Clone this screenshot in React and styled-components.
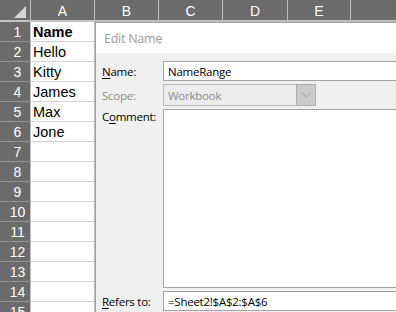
import React from 'react';
import styled, { createGlobalStyle } from 'styled-components';

const Global = createGlobalStyle`
  html, body { margin: 0; padding: 0; width: 396px; height: 312px; overflow: hidden; background: #fff; }
  #root { width: 396px; height: 312px; }
`;

const Page = styled.div`
  position: relative;
  width: 396px;
  height: 312px;
  overflow: hidden;
  font-family: "Liberation Sans", Arial, sans-serif;
`;

const Sheet = styled.div`
  display: grid;
  grid-template-columns: 31px 64px 64px 64px 65px 63px 64px;
  grid-template-rows: 22px repeat(15, 20px);
`;

const Corner = styled.div`
  background: #6b6b6b;
  border-right: 1px solid #c4c4c4;
  border-bottom: 2px solid #c4c4c4;
  box-sizing: border-box;
  display: flex;
  align-items: flex-end;
  justify-content: flex-end;
  padding: 0 4px 2px 0;
`;

const ColHead = styled.div`
  background: #6b6b6b;
  color: #fff;
  font-size: 14px;
  border-right: 1px solid #bdbdbd;
  border-bottom: 2px solid #c4c4c4;
  box-sizing: border-box;
  display: flex;
  align-items: center;
  justify-content: center;
  padding-top: 1px;
`;

const RowHead = styled.div`
  background: #6b6b6b;
  color: #fff;
  font-size: 14px;
  border-right: 1px solid #c4c4c4;
  border-bottom: 1px solid #959595;
  box-sizing: border-box;
  display: flex;
  align-items: center;
  justify-content: center;
  padding-left: 5px;
`;

const Cell = styled.div`
  background: #fff;
  color: #000;
  font-size: 14.5px;
  font-weight: ${(p) => (p.$bold ? 700 : 400)};
  border-right: 1px solid #d4d4d4;
  border-bottom: 1px solid #d4d4d4;
  box-sizing: border-box;
  display: flex;
  align-items: center;
  padding-left: 2px;
  white-space: nowrap;
`;

const Dialog = styled.div`
  position: absolute;
  left: 95px;
  top: 22px;
  width: 340px;
  height: 320px;
  background: #f0f0f0;
  border: 1px solid #a3a3a3;
  box-shadow: -1px 0 2px rgba(0, 0, 0, 0.15);
  font-family: "Open Sans", "Noto Sans", sans-serif;
  font-size: 11.5px;
  letter-spacing: -0.25px;
`;

const TitleBar = styled.div`
  height: 30px;
  background: #fff;
  color: #9a9a9a;
  font-size: 12.5px;
  display: flex;
  align-items: center;
  padding-left: 8px;
`;

const Form = styled.div`
  display: grid;
  grid-template-columns: 61px 1fr;
  grid-template-rows: 20px 22px 179px 20px;
  row-gap: 3px;
  padding: 8px 0 0 6px;
`;

const Label = styled.div`
  color: ${(p) => (p.$disabled ? '#8a8a8a' : '#000')};
  align-self: ${(p) => (p.$top ? 'start' : 'center')};
  line-height: 15px;
  white-space: nowrap;
  u { text-decoration-thickness: 1px; text-underline-offset: 2px; }
`;

const TextBox = styled.div`
  background: #fff;
  border: 1px solid #a2a2a2;
  box-sizing: border-box;
  display: flex;
  align-items: center;
  padding-left: 4px;
  color: #000;
  white-space: nowrap;
  overflow: hidden;
`;

const Select = styled.div`
  width: 153px;
  background: #ececec;
  border: 1px solid #bababa;
  box-sizing: border-box;
  display: flex;
  align-items: stretch;
  color: #8a8a8a;
`;

const SelectValue = styled.div`
  flex: 1;
  display: flex;
  align-items: center;
  padding-left: 4px;
`;

const SelectButton = styled.div`
  width: 18px;
  margin: -1px -1px -1px 0;
  background: #cccccc;
  border: 1px solid #adadad;
  display: flex;
  align-items: center;
  justify-content: center;
`;

const rows = ['Name', 'Hello', 'Kitty', 'James', 'Max', 'Jone'];
const cols = ['A', 'B', 'C', 'D', 'E', ''];

export default function App() {
  return (
    <Page>
      <Global />
      <Sheet>
        <Corner>
          <svg width="12" height="12" viewBox="0 0 12 12">
            <polygon points="12,0 12,12 0,12" fill="#d6d6d6" />
          </svg>
        </Corner>
        {cols.map((c, i) => (
          <ColHead key={i}>{c}</ColHead>
        ))}
        {Array.from({ length: 15 }, (_, i) => (
          <React.Fragment key={i}>
            <RowHead>{i + 1}</RowHead>
            <Cell $bold={i === 0}>{rows[i] || ''}</Cell>
            {cols.slice(1).map((c, j) => (
              <Cell key={j} />
            ))}
          </React.Fragment>
        ))}
      </Sheet>
      <Dialog>
        <TitleBar>Edit Name</TitleBar>
        <Form>
          <Label>
            <u>N</u>ame:
          </Label>
          <TextBox>NameRange</TextBox>
          <Label $disabled>Scope:</Label>
          <Select>
            <SelectValue>Workbook</SelectValue>
            <SelectButton>
              <svg width="9" height="6" viewBox="0 0 9 6">
                <polyline points="0.5,1 4.5,5 8.5,1" fill="none" stroke="#9a9a9a" strokeWidth="1" />
              </svg>
            </SelectButton>
          </Select>
          <Label $top>
            C<u>o</u>mment:
          </Label>
          <TextBox />
          <Label>
            <u>R</u>efers to:
          </Label>
          <TextBox>=Sheet2!$A$2:$A$6</TextBox>
        </Form>
      </Dialog>
    </Page>
  );
}
